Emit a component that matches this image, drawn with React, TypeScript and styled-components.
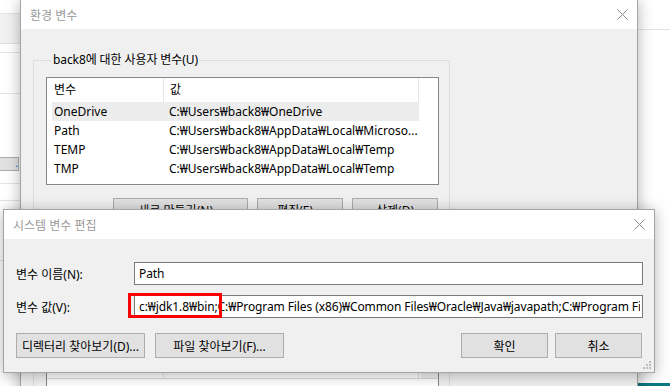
import React from "react";
import styled, { createGlobalStyle } from "styled-components";

const GlobalStyle = createGlobalStyle`
  html, body {
    margin: 0;
    padding: 0;
  }
  body {
    background: #fff;
    font-family: "Noto Sans", "Noto Sans CJK KR", sans-serif;
    font-size: 12px;
    color: #000;
  }
  * {
    box-sizing: border-box;
  }
`;

type Row = { name: string; value: string; selected?: boolean };

const userVars: Row[] = [
  { name: "OneDrive", value: "C:₩Users₩back8₩OneDrive", selected: true },
  { name: "Path", value: "C:₩Users₩back8₩AppData₩Local₩Microso..." },
  { name: "TEMP", value: "C:₩Users₩back8₩AppData₩Local₩Temp" },
  { name: "TMP", value: "C:₩Users₩back8₩AppData₩Local₩Temp" },
];

const systemVars: Row[] = [
  { name: "ComSpec", value: "C:₩WINDOWS₩system32₩cmd.exe" },
  { name: "DriverData", value: "C:₩Windows₩System32₩Drivers₩DriverData" },
];

const pathValue =
  "c:₩jdk1.8₩bin;C:₩Program Files (x86)₩Common Files₩Oracle₩Java₩javapath;C:₩Program Files₩Common Files₩Oracle₩Java₩javapath";

const CloseIcon = () => (
  <svg width="11" height="11" viewBox="0 0 11 11">
    <path d="M0.5 0.5 L10.5 10.5 M10.5 0.5 L0.5 10.5" stroke="#8c8c8c" strokeWidth="1" />
  </svg>
);

const GripIcon = () => (
  <svg width="9" height="9" viewBox="0 0 9 9">
    {[
      [6, 0],
      [3, 3],
      [6, 3],
      [0, 6],
      [3, 6],
      [6, 6],
    ].map(([x, y]) => (
      <rect key={`${x}-${y}`} x={x} y={y} width="2" height="2" fill="#bdbdbd" />
    ))}
  </svg>
);

const App = () => {
  return (
    <>
      <GlobalStyle />
      <Desktop>
        <SideApp>
          <SideBand $h={14} />
          <SideBand $h={30} $tone="#f2f2f2" />
          <SideBand $h={9} />
          <SideBand $h={41} />
          <SideBand $h={63} $line={false} />
          <SideButton>.</SideButton>
          <SideBand $h={13} />
          <SideBand $h={17} />
          <SideBand $h={60} />
          <SideBand $h={140} />
        </SideApp>

        <RightApp>
          <SideBand $h={30} />
          <RightFill />
          <Taskbar />
        </RightApp>

        <Window $left={20} $top={-1} $width={618} $height={400}>
          <TitleBar>
            <Title>환경 변수</Title>
            <CloseBox>
              <CloseIcon />
            </CloseBox>
          </TitleBar>
          <EnvBody>
            <Group>
              <Legend>back8에 대한 사용자 변수(U)</Legend>
              <ListView>
                <ListHeader>
                  <HeaderCell $w={117} $pad={7}>
                    변수
                  </HeaderCell>
                  <HeaderCell $w={255} $pad={6}>
                    값
                  </HeaderCell>
                </ListHeader>
                <ListBody>
                  {userVars.map((v) => (
                    <ListRow key={v.name} $selected={v.selected}>
                      <NameCell>{v.name}</NameCell>
                      <ValueCell>{v.value}</ValueCell>
                    </ListRow>
                  ))}
                </ListBody>
              </ListView>
              <GroupButtons>
                <PushButton $w={135} $h={23}>
                  새로 만들기(N)...
                </PushButton>
                <PushButton $w={86} $h={23}>
                  편집(E)...
                </PushButton>
                <PushButton $w={86} $h={23}>
                  삭제(D)
                </PushButton>
              </GroupButtons>
            </Group>

            <Group $gap={96}>
              <Legend>시스템 변수(S)</Legend>
              <ListView>
                <ListHeader $divider>
                  <HeaderCell $w={117} $pad={7}>
                    변수
                  </HeaderCell>
                  <HeaderCell $w={255} $pad={6}>
                    값
                  </HeaderCell>
                  <ScrollTop />
                </ListHeader>
                <ListBody $offset={5}>
                  {systemVars.map((v) => (
                    <ListRow key={v.name}>
                      <NameCell>{v.name}</NameCell>
                      <ValueCell>{v.value}</ValueCell>
                    </ListRow>
                  ))}
                </ListBody>
              </ListView>
            </Group>
          </EnvBody>
        </Window>

        <Window $left={3} $top={209} $width={652} $height={164}>
          <TitleBar>
            <Title>시스템 변수 편집</Title>
            <CloseBox>
              <CloseIcon />
            </CloseBox>
          </TitleBar>
          <EditBody>
            <Form>
              <FieldLabel>변수 이름(N):</FieldLabel>
              <TextField readOnly value="Path" />
              <FieldLabel>변수 값(V):</FieldLabel>
              <FieldWrap>
                <TextField readOnly value={pathValue} />
                <RedMark />
              </FieldWrap>
            </Form>
            <ButtonBar>
              <ButtonGroup $gap={10}>
                <PushButton $w={129} $h={25}>
                  디렉터리 찾아보기(D)...
                </PushButton>
                <PushButton $w={129} $h={25}>
                  파일 찾아보기(F)...
                </PushButton>
              </ButtonGroup>
              <ButtonGroup $gap={7}>
                <PushButton $w={87} $h={25}>
                  확인
                </PushButton>
                <PushButton $w={87} $h={25}>
                  취소
                </PushButton>
              </ButtonGroup>
            </ButtonBar>
          </EditBody>
          <Grip>
            <GripIcon />
          </Grip>
        </Window>
      </Desktop>
    </>
  );
};

const Desktop = styled.div`
  position: relative;
  width: 670px;
  height: 386px;
  overflow: hidden;
  background: #fff;
`;

const SideApp = styled.div`
  position: absolute;
  left: 0;
  top: 0;
  width: 24px;
  height: 386px;
  display: flex;
  flex-direction: column;
  background: #fff;
`;

const SideBand = styled.div<{ $h: number; $tone?: string; $line?: boolean }>`
  flex: none;
  height: ${(p) => p.$h}px;
  background: ${(p) => p.$tone ?? "#fff"};
  border-bottom: ${(p) => (p.$line === false ? "none" : "1px solid #e3e3e3")};
`;

const SideButton = styled.div`
  flex: none;
  width: 19px;
  height: 14px;
  background: #e1e1e1;
  border: 1px solid #adadad;
  border-left: none;
  color: #0a64c8;
  font-size: 10px;
  line-height: 10px;
  text-align: right;
`;

const RightApp = styled.div`
  position: absolute;
  right: 0;
  top: 0;
  width: 60px;
  height: 386px;
  display: flex;
  flex-direction: column;
  background: #fff;
`;

const RightFill = styled.div`
  flex: 1;
`;

const Taskbar = styled.div`
  flex: none;
  height: 3px;
  background: #0b7a80;
`;

const Window = styled.div<{ $left: number; $top: number; $width: number; $height: number }>`
  position: absolute;
  left: ${(p) => p.$left}px;
  top: ${(p) => p.$top}px;
  width: ${(p) => p.$width}px;
  height: ${(p) => p.$height}px;
  display: flex;
  flex-direction: column;
  background: #f0f0f0;
  border: 1px solid #a4a4a4;
  box-shadow: 0 2px 14px rgba(0, 0, 0, 0.3);
  overflow: hidden;
`;

const TitleBar = styled.div`
  flex: none;
  height: 29px;
  display: flex;
  align-items: center;
  justify-content: space-between;
  padding-left: 9px;
  background: #fff;
`;

const Title = styled.span`
  color: #9a9a9a;
  font-size: 12px;
`;

const CloseBox = styled.div`
  width: 30px;
  height: 29px;
  display: flex;
  align-items: center;
  justify-content: center;
`;

const EnvBody = styled.div`
  display: flex;
  flex-direction: column;
  padding: 23px 0 0 12px;
`;

const Group = styled.fieldset<{ $gap?: number }>`
  width: 417px;
  margin: ${(p) => p.$gap ?? 0}px 0 0 0;
  padding: 0 10px 11px 12px;
  border: 1px solid #dcdcdc;
  min-width: 0;
`;

const Legend = styled.legend`
  margin-left: 5px;
  padding: 0 2px;
  line-height: 16px;
  font-size: 12px;
  letter-spacing: -0.1px;
`;

const ListView = styled.div`
  width: 393px;
  height: 108px;
  margin-top: 9px;
  border: 1px solid #828790;
  background: #fff;
  overflow: hidden;
`;

const ListHeader = styled.div<{ $divider?: boolean }>`
  display: flex;
  height: 24px;
  border-bottom: ${(p) => (p.$divider ? "1px solid #d9d9d9" : "none")};
`;

const HeaderCell = styled.div<{ $w: number; $pad: number }>`
  flex: none;
  width: ${(p) => p.$w}px;
  padding-left: ${(p) => p.$pad}px;
  line-height: 24px;
  border-right: 1px solid #e5e5e5;
`;

const ScrollTop = styled.div`
  margin-left: auto;
  width: 17px;
  background: #f0f0f0;
`;

const ListBody = styled.div<{ $offset?: number }>`
  display: flex;
  flex-direction: column;
  padding-top: ${(p) => p.$offset ?? 0}px;
`;

const ListRow = styled.div<{ $selected?: boolean }>`
  display: flex;
  width: 367px;
  height: 19px;
  margin-left: 5px;
  line-height: 19px;
  background: ${(p) => (p.$selected ? "#ececec" : "transparent")};
`;

const NameCell = styled.div`
  flex: none;
  width: 117px;
  padding-left: 2px;
  white-space: nowrap;
`;

const ValueCell = styled.div`
  flex: 1;
  white-space: nowrap;
  overflow: hidden;
`;

const GroupButtons = styled.div`
  display: flex;
  justify-content: flex-end;
  gap: 9px;
  width: 392px;
  margin-top: 13px;
`;

const PushButton = styled.button<{ $w: number; $h: number }>`
  flex: none;
  width: ${(p) => p.$w}px;
  height: ${(p) => p.$h}px;
  padding: 0;
  background: #e1e1e1;
  border: 1px solid #adadad;
  border-radius: 0;
  font-family: inherit;
  font-size: 12px;
  color: #000;
  white-space: nowrap;
`;

const EditBody = styled.div`
  display: flex;
  flex-direction: column;
  padding: 23px 11px 14px 12px;
`;

const Form = styled.div`
  display: grid;
  grid-template-columns: 118px 1fr;
  row-gap: 10px;
  align-items: center;
`;

const FieldLabel = styled.label`
  font-size: 12px;
  white-space: nowrap;
`;

const FieldWrap = styled.div`
  position: relative;
`;

const TextField = styled.input`
  display: block;
  width: 100%;
  height: 23px;
  margin: 0;
  padding: 0 2px 0 4px;
  border: 1px solid #7a7a7a;
  border-radius: 0;
  background: #fff;
  font-family: inherit;
  font-size: 12px;
  letter-spacing: -0.1px;
  color: #000;
  outline: none;
`;

const RedMark = styled.div`
  position: absolute;
  left: -6px;
  top: -2px;
  width: 94px;
  height: 25px;
  border: 3px solid #ff0000;
  pointer-events: none;
`;

const ButtonBar = styled.div`
  display: flex;
  justify-content: space-between;
  margin-top: 15px;
  padding-right: 1px;
`;

const ButtonGroup = styled.div<{ $gap: number }>`
  display: flex;
  gap: ${(p) => p.$gap}px;
`;

const Grip = styled.div`
  position: absolute;
  right: 2px;
  bottom: 2px;
  display: flex;
`;

export default App;
